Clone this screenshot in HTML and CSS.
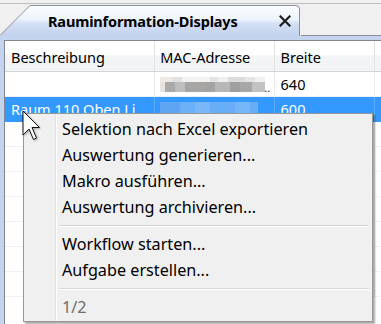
FILE: index.html
```html
<!DOCTYPE html>
<html lang="de">
<head>
<meta charset="utf-8">
<title>Rauminformation-Displays</title>
<link rel="stylesheet" href="styles.css">
</head>
<body>
<div class="app">
  <div class="topbar"></div>
  <div class="tabstrip">
    <div class="tab">
      <svg class="tab-shape" viewBox="0 0 301 32" preserveAspectRatio="none" aria-hidden="true">
        <defs>
          <linearGradient id="tg" x1="0" y1="0" x2="0" y2="1">
            <stop offset="0" stop-color="#fbfdff"/>
            <stop offset="0.45" stop-color="#eef4fc"/>
            <stop offset="0.6" stop-color="#d2def3"/>
            <stop offset="1" stop-color="#c3d3ee"/>
          </linearGradient>
        </defs>
        <path d="M0 32 L0 31 L30 1.5 L296 1.5 Q299.5 1.5 299.5 5 L299.5 32 Z" fill="url(#tg)"/>
        <path d="M0.5 31 L30 1.5 L296 1.5 Q299.5 1.5 299.5 5 L299.5 32" fill="none" stroke="#8a8f99" stroke-width="1"/>
      </svg>
      <span class="tab-title">Rauminformation-Displays</span>
      <svg class="tab-close" viewBox="0 0 12 12" aria-hidden="true">
        <path d="M1.5 1.5 L10.5 10.5 M10.5 1.5 L1.5 10.5" stroke="#1e1e1e" stroke-width="2.2" stroke-linecap="square"/>
      </svg>
    </div>
    <div class="strip-rest"></div>
  </div>
  <div class="panel">
    <div class="grid">
      <div class="row head">
        <div class="cell c1">Beschreibung</div>
        <div class="cell c2">MAC-Adresse</div>
        <div class="cell c3">Breite</div>
        <div class="cell c4"></div>
      </div>
      <div class="row">
        <div class="cell c1"></div>
        <div class="cell c2"><span class="blur blur-gray"></span><span class="dots">..</span></div>
        <div class="cell c3">640</div>
        <div class="cell c4"></div>
      </div>
      <div class="row selected">
        <div class="cell c1">Raum 110 Oben Li</div>
        <div class="cell c2"><span class="blur blur-blue"></span></div>
        <div class="cell c3">600</div>
        <div class="cell c4"></div>
      </div>
      <div class="row"><div class="cell c1"></div><div class="cell c2"></div><div class="cell c3"></div><div class="cell c4"></div></div>
      <div class="row"><div class="cell c1"></div><div class="cell c2"></div><div class="cell c3"></div><div class="cell c4"></div></div>
      <div class="row"><div class="cell c1"></div><div class="cell c2"></div><div class="cell c3"></div><div class="cell c4"></div></div>
      <div class="row"><div class="cell c1"></div><div class="cell c2"></div><div class="cell c3"></div><div class="cell c4"></div></div>
      <div class="row"><div class="cell c1"></div><div class="cell c2"></div><div class="cell c3"></div><div class="cell c4"></div></div>
      <div class="row"><div class="cell c1"></div><div class="cell c2"></div><div class="cell c3"></div><div class="cell c4"></div></div>
      <div class="row"><div class="cell c1"></div><div class="cell c2"></div><div class="cell c3"></div><div class="cell c4"></div></div>
    </div>
  </div>

  <div class="menu">
    <div class="item">Selektion nach Excel exportieren</div>
    <div class="item">Auswertung generieren...</div>
    <div class="item">Makro ausführen...</div>
    <div class="item">Auswertung archivieren...</div>
    <div class="sep"></div>
    <div class="item">Workflow starten...</div>
    <div class="item">Aufgabe erstellen...</div>
    <div class="sep"></div>
    <div class="item disabled">1/2</div>
  </div>

  <svg class="cursor" viewBox="0 0 20 31" aria-hidden="true">
    <path d="M1 1 L1 25 L7 19 L11.5 29.5 L14.5 28 L10 17.5 L17.5 17.5 Z" fill="#ffffff" stroke="#111111" stroke-width="1" stroke-linejoin="miter"/>
  </svg>
</div>
</body>
</html>
```

FILE: styles.css
```css
* { box-sizing: border-box; }

html, body {
  margin: 0;
  padding: 0;
  width: 381px;
  height: 324px;
  overflow: hidden;
  background: #f0f0f0;
  font-family: "Noto Sans", "Open Sans", sans-serif;
  font-size: 14.5px;
  color: #000;
}

.app {
  position: relative;
  width: 381px;
  height: 324px;
  overflow: hidden;
}

.topbar {
  height: 4px;
  background: #f0f0f0;
  border-bottom: 1px solid #bdbdbd;
}

.tabstrip {
  display: flex;
  height: 32px;
}

.tab {
  position: relative;
  width: 301px;
  height: 32px;
  display: flex;
  align-items: center;
  padding-left: 48px;
  padding-top: 2px;
}

.tab-shape {
  position: absolute;
  left: 0;
  top: 0;
  width: 301px;
  height: 32px;
}

.tab-title {
  position: relative;
  font-weight: 700;
  font-size: 14.5px;
  letter-spacing: -0.15px;
  color: #000;
}

.tab-close {
  position: relative;
  width: 12px;
  height: 12px;
  margin-left: auto;
  margin-right: 10px;
}

.strip-rest {
  flex: 1;
  border-bottom: 1px solid #8a8f99;
  background: #f0f0f0;
}

.panel {
  background: #c4d3ee;
  padding: 4px 0 0 4px;
  height: 288px;
}

.grid {
  background: #fff;
  border-top: 1px solid #828790;
  border-left: 1px solid #828790;
  height: 100%;
  overflow: hidden;
}

.row {
  display: flex;
  height: 25px;
  border-bottom: 1px solid #f0f0f0;
}

.row.head {
  height: 31px;
  border-bottom: 1px solid #d5d5d5;
  background: linear-gradient(#ffffff 0%, #ffffff 45%, #f4f5f6 50%, #f1f2f3 100%);
}

.cell {
  display: flex;
  align-items: center;
  white-space: nowrap;
  overflow: hidden;
  padding-left: 6px;
  border-right: 1px solid #ececec;
}

.head .cell {
  border-right-color: #e3e3e3;
  padding-top: 2px;
}

.c1 { width: 151px; }
.c2 { width: 120px; padding-left: 5px; }
.c3 { width: 101px; }
.c4 { flex: 1; border-right: none; }

.row.selected {
  background: #3399ff;
  color: #fff;
  border-bottom-color: #3399ff;
}

.row.selected .cell { border-right-color: #5aaefc; }

.blur {
  display: block;
  height: 15px;
  flex: none;
}

.blur-gray {
  width: 105px;
  background:
    linear-gradient(to right, #ece9e6 0 12px, #e2e0de 12px 22px, #f2f2f1 22px 50px, #e2e2e2 50px 58px, #f0f0f0 58px 68px, #dedcdb 68px 85px, #e6e5e4 85px 95px, #f1f1f1 95px 105px) top / 100% 5px no-repeat,
    linear-gradient(to right, #e6e3e0 0 5px, #a9a9a9 5px 15px, #bdbdbd 15px 25px, #a8a6a4 25px 45px, #a4a3a2 45px 55px, #b7b7b7 55px 70px, #9f9f9f 70px 80px, #a7a7a7 80px 92px, #c2c2c2 92px 105px) bottom / 100% 10px no-repeat;
}

.dots {
  font-size: 11px;
  line-height: 1;
  align-self: flex-end;
  margin-bottom: 3px;
  margin-left: -1px;
  color: #222;
}

.blur-blue {
  width: 98px;
  height: 15px;
  background: linear-gradient(to right, #5ea6f4 0 20px, #6cb0f7 20px 35px, #79b7f8 35px 50px, #69adf6 50px 75px, #76b6f8 75px 90px, #68acf6 90px 98px);
}

.menu {
  position: absolute;
  left: 23px;
  top: 113px;
  width: 350px;
  padding: 2px 2px 1px 2px;
  border: 1px solid #979797;
  background:
    linear-gradient(to right, transparent 31px, #e2e3e3 31px 32px, #ffffff 32px 33px, transparent 33px),
    #f0f0f0;
  box-shadow: 2px 2px 2px rgba(0, 0, 0, 0.35);
  font-size: 16.2px;
}

.item {
  height: 26px;
  line-height: 26px;
  padding-left: 36px;
  white-space: nowrap;
}

.item.disabled { color: #6d6d6d; }

.sep {
  height: 11px;
  margin-left: 33px;
  margin-right: 1px;
  padding-top: 5px;
}

.sep::before {
  content: "";
  display: block;
  border-top: 1px solid #d7d7d7;
  border-bottom: 1px solid #ffffff;
}

.cursor {
  position: absolute;
  left: 22px;
  top: 110px;
  width: 20px;
  height: 31px;
  filter: drop-shadow(1px 1px 1px rgba(0, 0, 0, 0.3));
}
```
